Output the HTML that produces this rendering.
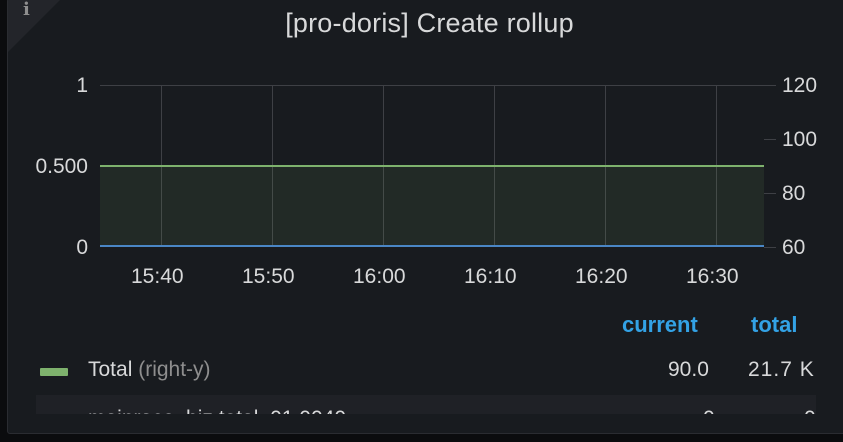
<!DOCTYPE html>
<html><head><style>
body{margin:0;width:843px;height:442px;background:#0b0c0e;overflow:hidden;font-family:"Liberation Sans",sans-serif;}
.panel{position:absolute;left:7px;top:-2px;width:840px;height:434px;background:#181b1f;border:1px solid #2a2c31;border-radius:3px;overflow:hidden}
.t{position:absolute;color:#d8d9da;font-size:21px}
.g{position:absolute;background:#3e4045}
</style></head><body>
<div class="panel">
<svg style="position:absolute;left:0;top:0" width="60" height="60"><polygon points="0,0 53,0 0,53" fill="#23252a"/></svg>
<div class="t" style="left:15px;top:0px;font-size:18px;font-weight:bold;color:#8e8e8e;font-family:'DejaVu Serif',serif">i</div>
<div class="t" style="left:0;width:843px;text-align:center;top:9px;font-size:27px;color:#d8d9da;letter-spacing:0.2px">[pro-doris] Create rollup</div>
</div>
<div class="g" style="left:100px;top:85px;width:664px;height:1px"></div>
<div class="g" style="left:161px;top:85px;width:1px;height:162px"></div>
<div class="g" style="left:272px;top:85px;width:1px;height:162px"></div>
<div class="g" style="left:383px;top:85px;width:1px;height:162px"></div>
<div class="g" style="left:494px;top:85px;width:1px;height:162px"></div>
<div class="g" style="left:605px;top:85px;width:1px;height:162px"></div>
<div class="g" style="left:716px;top:85px;width:1px;height:162px"></div>
<div style="position:absolute;left:100px;top:166px;width:664px;height:80px;background:rgba(126,178,109,0.1)"></div>
<div style="position:absolute;left:100px;top:165px;width:664px;height:2px;background:#7eb26d"></div>
<div style="position:absolute;left:100px;top:245px;width:664px;height:2px;background:#4a86c5"></div>
<div class="g" style="left:764px;top:85px;width:12px;height:1px"></div>
<div class="g" style="left:764px;top:139px;width:12px;height:1px"></div>
<div class="g" style="left:764px;top:193px;width:12px;height:1px"></div>
<div class="g" style="left:764px;top:247px;width:12px;height:1px"></div>
<div class="t" style="left:0;width:88px;text-align:right;top:74px">1</div>
<div class="t" style="left:0;width:88px;text-align:right;top:155px">0.500</div>
<div class="t" style="left:0;width:88px;text-align:right;top:236px">0</div>
<div class="t" style="left:782px;top:74px">120</div>
<div class="t" style="left:782px;top:128px">100</div>
<div class="t" style="left:782px;top:182px">80</div>
<div class="t" style="left:782px;top:236px">60</div>
<div class="t" style="left:131px;top:265px">15:40</div>
<div class="t" style="left:242px;top:265px">15:50</div>
<div class="t" style="left:353px;top:265px">16:00</div>
<div class="t" style="left:464px;top:265px">16:10</div>
<div class="t" style="left:575px;top:265px">16:20</div>
<div class="t" style="left:686px;top:265px">16:30</div>
<div class="t" style="left:622px;top:312px;color:#33a2e5;font-weight:bold;font-size:22px">current</div>
<div class="t" style="left:751px;top:312px;color:#33a2e5;font-weight:bold;font-size:22px">total</div>
<div style="position:absolute;left:40px;top:368px;width:28px;height:8px;background:#7eb26d;border-radius:1px"></div>
<div class="t" style="left:88px;top:358px">Total <span style="color:#8e8e8e">(right-y)</span></div>
<div class="t" style="left:668px;top:358px">90.0</div>
<div class="t" style="left:748px;top:358px;letter-spacing:1px">21.7 K</div>
<div style="position:absolute;left:36px;top:395px;width:780px;height:19px;background:#1f2126;overflow:hidden">
<div class="t" style="left:52px;top:12px">mainrace_biz total_01 0040</div>
<div class="t" style="left:667px;top:12px">0</div>
<div class="t" style="left:768px;top:12px">0</div>
</div>
</body></html>
